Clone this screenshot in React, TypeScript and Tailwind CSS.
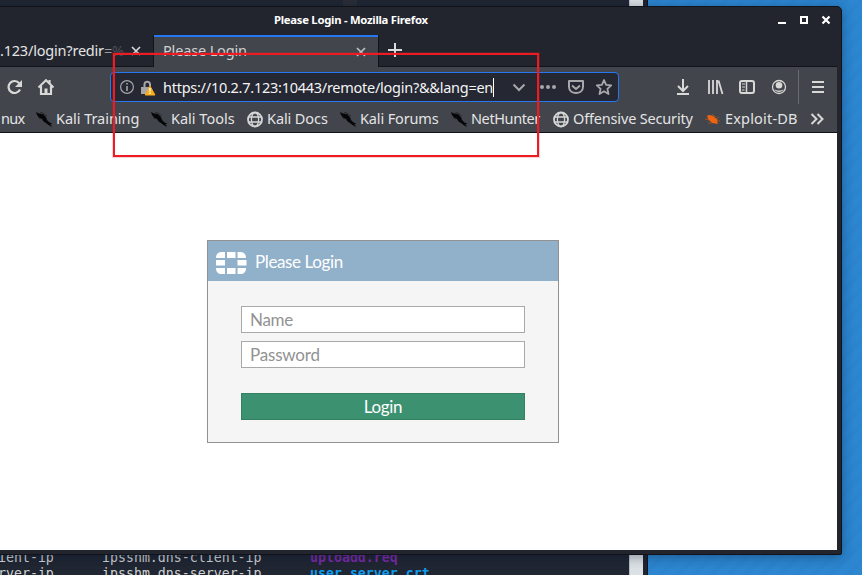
import type { ReactNode } from 'react';

function KaliIcon() {
  return (
    <svg width="17" height="17" viewBox="0 0 17 17" className="shrink-0">
      <path d="M0 1L3 2.5L7 3L10 6L11 9L13.5 11.5L16.5 12.5L14.5 13L16 16L12.5 14L10 12L7.5 10.5L6 8L3 6.5L1 4Z" fill="#050607" />
      <path d="M4 1L8 2.5L11 5M2 6.5L5 8" stroke="#1d1f23" strokeWidth=".7" fill="none" />
    </svg>
  );
}

function GlobeIcon() {
  return (
    <svg width="17" height="17" viewBox="0 0 17 17" fill="none" stroke="#d5d6d6" strokeWidth="1.3" className="shrink-0">
      <circle cx="8" cy="8.5" r="7" strokeWidth="1.8" />
      <ellipse cx="8" cy="8.5" rx="3.6" ry="7" />
      <path d="M1 6H15M1 11H15" />
    </svg>
  );
}

function ExploitIcon() {
  return (
    <svg width="17" height="17" viewBox="0 0 17 17" className="shrink-0">
      <path d="M2 4.5L5 4L8 5L11 7.5L13 9L12 10L13 13L10 12.5L7 12L5 10L3 8Z" fill="#ed6410" />
      <path d="M7 3L9 5L11 6M0 8L4 9M3 12L7 12M11 8L14 6M12 10L15 10" stroke="#b8541b" strokeWidth=".8" fill="none" />
    </svg>
  );
}

function Bookmark({ icon, label, className, textClass }: { icon: ReactNode; label: string; className: string; textClass: string }) {
  return (
    <div className={`flex shrink-0 items-center whitespace-nowrap ${className}`}>
      {icon}
      <span className={textClass}>{label}</span>
    </div>
  );
}

function TitleBar() {
  return (
    <div className="flex h-[27px] shrink-0 items-center">
      <div className="w-[274px]" />
      <div className="w-[504px] whitespace-nowrap text-[11.3px] font-bold leading-[20px] tracking-[-0.27px] text-white">Please Login - Mozilla Firefox</div>
      <svg width="54" height="14" viewBox="0 0 54 14" fill="none" stroke="#fff">
        <path d="M0 10H8" strokeWidth="2" />
        <rect x="23" y="4" width="6" height="6" strokeWidth="2" />
        <path d="M44.5 3.5L51.5 10.5M51.5 3.5L44.5 10.5" strokeWidth="2.2" />
      </svg>
    </div>
  );
}

function TabStrip() {
  return (
    <div className="flex h-[34px] shrink-0 pt-[2px] text-[14.5px] text-[#e4e4e5]">
      <div className="flex w-[154px] items-center overflow-hidden border-b border-r border-[#12141a] whitespace-nowrap">
        <span className="w-[130px] tracking-[-0.2px]">
          .123/login?redir<span className="text-[#9b9da1]">=</span><span className="text-[#4b4e56]">%</span>
        </span>
        <svg width="12" height="12" viewBox="0 0 12 12" stroke="#d5d6d7" strokeWidth="1.7"><path d="M2 2L10 10M10 2L2 10" /></svg>
      </div>
      <div className="flex w-[224px] items-center border-t-2 border-[#2677f0] bg-[#42454c] pl-[9px]">
        <span className="w-[192px] pb-[2px] tracking-[-0.15px] text-[#d0d1d2]">Please Login</span>
        <svg width="12" height="12" viewBox="0 0 12 12" stroke="#c0c1c3" strokeWidth="1.7"><path d="M2 2L10 10M10 2L2 10" /></svg>
      </div>
      <div className="flex flex-1 border-b border-l border-[#12141a] pl-[9px] pt-[8px]">
        <svg width="15" height="15" viewBox="0 0 15 15" stroke="#dadbdc" strokeWidth="2"><path d="M0 7H14M7 0V14" /></svg>
      </div>
    </div>
  );
}

function NavBar() {
  return (
    <div className="flex h-[38px] shrink-0 items-center pt-[2px]">
      <svg width="110" height="30" viewBox="0 72 110 30" fill="none" stroke="#d8d8d6" className="shrink-0">
        <path d="M19.2 83.2A6 6 0 1 0 20 89.5" strokeWidth="2.2" />
        <path d="M22 80V87H15Z" fill="#d8d8d6" stroke="none" />
        <path d="M38.5 87.5L46 80.2L53.5 87.5" strokeWidth="2" />
        <path d="M41 86V94H51V86M49.5 80V84" strokeWidth="2.2" />
        <path d="M46 94V88.5" strokeWidth="3" />
      </svg>
      <div className="flex h-[30px] w-[509px] shrink-0 items-center rounded-[4px] border border-[#2678f1] bg-[#252832]">
        <svg width="52" height="28" viewBox="111 73 52 28" className="shrink-0">
          <circle cx="127" cy="87" r="6.4" fill="none" stroke="#a5a6a8" strokeWidth="1.2" />
          <path d="M127 86V91M127 83V84.6" stroke="#a5a6a8" strokeWidth="1.6" />
          <path d="M144.5 87V84A2.8 2.8 0 0 1 150 84V86" fill="none" stroke="#a5a6a8" strokeWidth="2" />
          <path d="M141 87H150V94H141Z" fill="#a5a6a8" />
          <path d="M150 86L155 95H145.2Z" fill="#fbad18" stroke="#fbad18" strokeLinejoin="round" />
          <path d="M150 88V91.4M150 92.6V94" stroke="#fff" strokeWidth="1.4" />
        </svg>
        <div className="flex w-[336px] shrink-0 items-center whitespace-nowrap text-[14.5px] tracking-[-0.26px] text-[#f4f4f5]">
          <span className="w-[330px] pt-px">https://10.2.7.123:10443/remote/login?&amp;&amp;lang=en</span>
          <span className="h-[19px] w-px bg-white" />
        </div>
        <svg width="119" height="28" viewBox="499 73 119 28" fill="none" stroke="#a7a8ab" strokeWidth="2" className="shrink-0">
          <path d="M513.5 84.5L519 90L524.5 84.5" />
          <g fill="#a7a8ab" stroke="none"><circle cx="542" cy="87" r="2" /><circle cx="548" cy="87" r="2" /><circle cx="554" cy="87" r="2" /></g>
          <path d="M569 81H583V87C583 95 569 95 569 87ZM572 85.5L576 89L580 85.5" strokeLinejoin="round" />
          <path d="M604 80L606.1 84.8L611.2 85.3L607.4 88.8L608.5 94L604 91.3L599.5 94L600.6 88.8L596.8 85.3L601.9 84.8Z" strokeWidth="1.8" strokeLinejoin="round" />
        </svg>
      </div>
      <svg width="218" height="36" viewBox="619 69 218 36" fill="none" stroke="#d8d8d6" strokeWidth="2" className="shrink-0">
        <path d="M683 79V90M678 86L683 91L688 86M677 94H689" />
        <path d="M709 80V94M713 80V94M717 80V94M718.5 80.5L722.5 94" strokeWidth="1.8" />
        <rect x="740" y="81" width="14" height="12" rx="2" />
        <path d="M746.5 81V93" strokeWidth="1.5" /><path d="M742 84H745M742 87H745M742 90H744.5" strokeWidth="1" />
        <circle cx="779" cy="87" r="6.5" strokeWidth="1.3" />
        <circle cx="779" cy="85.3" r="3.3" fill="#d8d8d6" stroke="none" />
        <path d="M774.5 89C776 91 782 91 783.5 89C783 93 775 93 774.5 89Z" fill="#d8d8d6" stroke="none" />
        <path d="M798.5 70V104" stroke="#696b70" strokeWidth="1" />
        <path d="M812 82H824M812 87H824M812 92H824" />
      </svg>
    </div>
  );
}

function BookmarksBar() {
  return (
    <div className="flex h-[28px] shrink-0 items-center border-b border-[#101216] pt-px text-[14.5px] text-[#e4e4e4]">
      <span className="w-[36px] shrink-0 pl-px tracking-[-0.7px]">nux</span>
      <Bookmark icon={<KaliIcon />} label="Kali Training" className="w-[115px]" textClass="pl-[3px] tracking-[-0.04px]" />
      <Bookmark icon={<KaliIcon />} label="Kali Tools" className="w-[96px]" textClass="pl-[3px]" />
      <Bookmark icon={<GlobeIcon />} label="Kali Docs" className="w-[93px]" textClass="pl-[3px] tracking-[-0.1px]" />
      <Bookmark icon={<KaliIcon />} label="Kali Forums" className="w-[111px]" textClass="pl-[3px] tracking-[-0.14px]" />
      <Bookmark icon={<KaliIcon />} label="NetHunter" className="w-[102px]" textClass="pl-[3px] tracking-[-0.4px]" />
      <Bookmark icon={<GlobeIcon />} label="Offensive Security" className="w-[152px]" textClass="pl-[3px] tracking-[-0.17px]" />
      <Bookmark icon={<ExploitIcon />} label="Exploit-DB" className="w-[105px]" textClass="pl-[3px] tracking-[0.18px]" />
      <svg width="15" height="14" viewBox="0 0 15 14" fill="none" stroke="#d8d8d6" strokeWidth="2" className="shrink-0"><path d="M1.5 2L6.5 7L1.5 12M7.5 2L12.5 7L7.5 12" /></svg>
    </div>
  );
}

function LoginPage() {
  return (
    <div className="flex h-[417px] w-[837px] bg-white pl-[207px] pt-[107px] font-[Lato,sans-serif] text-[17px]">
      <div className="h-[203px] w-[352px] border border-[#929292] bg-[#f5f5f5]">
        <div className="flex h-[40px] items-center bg-[#91b0ca] pl-[8px] text-white">
          <svg width="31" height="22" viewBox="0 0 31 22" fill="#fff" className="mt-[4px]">
            <path d="M6 0H9V6H0C0 2 2 0 6 0ZM11 0H19.5V6H11ZM21.5 0H24C28 0 30 2 30 6H21.5ZM0 8H9V13.5H0ZM21.5 8H30.5V13.5H21.5ZM0 16H9V22H6C2 22 0 20 0 16ZM11 16H19.5V22H11ZM21.5 16H30C30 20 28 22 24 22H21.5Z" />
          </svg>
          <span className="ml-[8px] mt-[2px] tracking-[-0.38px]">Please Login</span>
        </div>
        <form className="flex flex-col px-[33px] pt-[25px]">
          <input aria-label="Name" placeholder="Name" className="h-[27px] w-full border border-[#a9a9a9] bg-white px-[8px] pb-px tracking-[-0.3px] placeholder:text-[#929292]" />
          <input aria-label="Password" placeholder="Password" className="mt-[8px] h-[27px] w-full border border-[#a9a9a9] bg-white px-[8px] pb-px tracking-[-0.2px] placeholder:text-[#929292]" />
          <button type="button" className="mt-[25px] h-[27px] border border-[#358060] bg-[#3c9270] leading-[25px] tracking-[-0.35px] text-white">Login</button>
        </form>
      </div>
    </div>
  );
}

export default function App() {
  return (
    <div className="relative h-[575px] w-[862px] overflow-hidden bg-[#2c83cc] bg-[repeating-linear-gradient(135deg,#2c86d0_0px,#2c86d0_6px,#2b84cd_9px,#2b84cd_12px)] font-['Noto_Sans',sans-serif]">
      <div className="absolute left-0 top-0 flex h-[575px] w-[648px] border-r border-[#111621] bg-[#20252f]">
        <div className="flex w-[629px] flex-col justify-end bg-[#202632]">
          <div className="flex h-[25px] flex-col whitespace-pre font-['DejaVu_Sans_Mono',monospace] text-[13.25px] leading-[16px] text-[#d0d1d2]">
            <div className="flex h-[16px] shrink-0"><span className="-ml-[2px] w-[104px]">ient-ip</span><span className="w-[208px]">ipsshm.dns-client-ip</span><b className="text-[#7a2ba8]">uploadd.req</b></div>
            <div className="flex h-[16px] shrink-0"><span className="-ml-[2px] w-[104px]">rver-ip</span><span className="w-[208px]">ipsshm.dns-server-ip</span><b className="text-[#129be8]">user_server.crt</b></div>
          </div>
        </div>
        <div className="w-[14px] border-l border-[#b7bdc4] bg-[#dce1e5]" />
      </div>
      <div className="absolute left-[343px] top-0 h-[6px] w-[14px] bg-[#292d36]" />
      <div className="absolute -left-[1px] top-[6px] h-[549px] w-[843px] overflow-hidden rounded-tr-[5px] rounded-br-[2px] border border-[#101319] bg-[#22252e] shadow-[0_2px_12px_rgba(0,15,40,0.38)]">
        <div className="-mt-px flex w-[837px] flex-col">
          <TitleBar />
          <TabStrip />
          <div className="bg-[#42454c]">
            <NavBar />
            <BookmarksBar />
          </div>
          <LoginPage />
        </div>
      </div>
      <div className="absolute left-[113px] top-[53px] h-[104px] w-[426px] border-2 border-[#ed1c24] shadow-[0_0_0_1px_rgba(237,28,36,0.2)]" />
    </div>
  );
}
